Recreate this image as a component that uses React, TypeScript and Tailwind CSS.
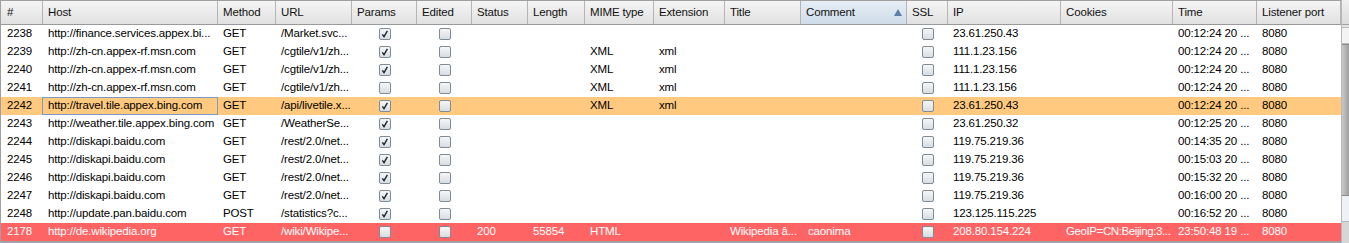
import React from "react";

const cols = [
  { name: "#", w: 42 },
  { name: "Host", w: 175 },
  { name: "Method", w: 58 },
  { name: "URL", w: 76 },
  { name: "Params", w: 65 },
  { name: "Edited", w: 55 },
  { name: "Status", w: 56 },
  { name: "Length", w: 57 },
  { name: "MIME type", w: 69 },
  { name: "Extension", w: 71 },
  { name: "Title", w: 76 },
  { name: "Comment", w: 106 },
  { name: "SSL", w: 41 },
  { name: "IP", w: 113 },
  { name: "Cookies", w: 112 },
  { name: "Time", w: 84 },
  { name: "Listener port", w: 84 },
];

type Row = {
  id: string;
  host: string;
  method: string;
  url: string;
  params: boolean;
  status?: string;
  length?: string;
  mime?: string;
  ext?: string;
  title?: string;
  comment?: string;
  ip: string;
  cookies?: string;
  time: string;
  port: string;
  kind?: "sel" | "red";
};

const rows: Row[] = [
  { id: "2238", host: "http://finance.services.appex.bi...", method: "GET", url: "/Market.svc...", params: true, ip: "23.61.250.43", time: "00:12:24 20 ...", port: "8080" },
  { id: "2239", host: "http://zh-cn.appex-rf.msn.com", method: "GET", url: "/cgtile/v1/zh...", params: true, mime: "XML", ext: "xml", ip: "111.1.23.156", time: "00:12:24 20 ...", port: "8080" },
  { id: "2240", host: "http://zh-cn.appex-rf.msn.com", method: "GET", url: "/cgtile/v1/zh...", params: true, mime: "XML", ext: "xml", ip: "111.1.23.156", time: "00:12:24 20 ...", port: "8080" },
  { id: "2241", host: "http://zh-cn.appex-rf.msn.com", method: "GET", url: "/cgtile/v1/zh...", params: false, mime: "XML", ext: "xml", ip: "111.1.23.156", time: "00:12:24 20 ...", port: "8080" },
  { id: "2242", host: "http://travel.tile.appex.bing.com", method: "GET", url: "/api/livetile.x...", params: true, mime: "XML", ext: "xml", ip: "23.61.250.43", time: "00:12:24 20 ...", port: "8080", kind: "sel" },
  { id: "2243", host: "http://weather.tile.appex.bing.com", method: "GET", url: "/WeatherSe...", params: true, ip: "23.61.250.32", time: "00:12:25 20 ...", port: "8080" },
  { id: "2244", host: "http://diskapi.baidu.com", method: "GET", url: "/rest/2.0/net...", params: true, ip: "119.75.219.36", time: "00:14:35 20 ...", port: "8080" },
  { id: "2245", host: "http://diskapi.baidu.com", method: "GET", url: "/rest/2.0/net...", params: true, ip: "119.75.219.36", time: "00:15:03 20 ...", port: "8080" },
  { id: "2246", host: "http://diskapi.baidu.com", method: "GET", url: "/rest/2.0/net...", params: true, ip: "119.75.219.36", time: "00:15:32 20 ...", port: "8080" },
  { id: "2247", host: "http://diskapi.baidu.com", method: "GET", url: "/rest/2.0/net...", params: true, ip: "119.75.219.36", time: "00:16:00 20 ...", port: "8080" },
  { id: "2248", host: "http://update.pan.baidu.com", method: "POST", url: "/statistics?c...", params: true, ip: "123.125.115.225", time: "00:16:52 20 ...", port: "8080" },
  { id: "2178", host: "http://de.wikipedia.org", method: "GET", url: "/wiki/Wikipe...", params: false, status: "200", length: "55854", mime: "HTML", title: "Wikipedia â...", comment: "caonima", ip: "208.80.154.224", cookies: "GeoIP=CN:Beijing:3...", time: "23:50:48 19 ...", port: "8080", kind: "red" },
];

function Check({ on }: { on: boolean }) {
  return (
    <div className="w-[12px] h-[12px] rounded-[2px] border border-[#7f8b97] bg-gradient-to-b from-[#f6f6f6] to-[#d9dde2] flex items-center justify-center">
      {on && (
        <svg width="8" height="8" viewBox="0 0 8 8">
          <path d="M1.4 4.4 L3 6.6 L6.4 0.8" fill="none" stroke="#1d2733" strokeWidth="1.4" />
        </svg>
      )}
    </div>
  );
}

function Cell({ w, children, center, first }: { w: number; children?: React.ReactNode; center?: boolean; first?: boolean }) {
  return (
    <div
      style={{ width: w }}
      className={`shrink-0 h-full flex items-center overflow-hidden whitespace-nowrap ${center ? "justify-center" : first ? "pl-[6px]" : "pl-[5px]"}`}
    >
      {children}
    </div>
  );
}

export default function App() {
  return (
    <div
      className="w-[1349px] h-[243px] bg-white flex overflow-hidden text-[11.5px] tracking-[-0.15px] text-black"
      style={{ fontFamily: '"Liberation Sans", Arial, sans-serif' }}
    >
      <div className="w-[1341px] flex flex-col border-l border-[#a0a0a0] border-b-2 border-b-[#a3a3a3]">
        {/* header */}
        <div className="h-[25px] flex border-t border-[#a0a0a0] border-b border-b-[#9a9a9a] bg-gradient-to-b from-[#f5f5f5] to-[#e1e1e1] shrink-0">
          {cols.map((c, i) => (
            <div
              key={c.name}
              style={{ width: c.w }}
              className={`shrink-0 h-full flex items-center justify-between border-r border-[#b4b4b4] ${i === 0 ? "pl-[6px]" : "pl-[5px]"} ${c.name === "Comment" ? "bg-gradient-to-b from-[#e6eef6] to-[#cfdde9] pr-[4px]" : ""}`}
            >
              <span className="text-[#111]">{c.name}</span>
              {c.name === "Comment" && (
                <svg width="8" height="7" viewBox="0 0 8 7">
                  <path d="M4 0 L8 7 L0 7 Z" fill="#5b7fa6" />
                </svg>
              )}
            </div>
          ))}
        </div>
        {/* rows */}
        <div className="flex flex-col">
          {rows.map((r) => {
            const bg = r.kind === "sel" ? "bg-[#ffc97f]" : r.kind === "red" ? "bg-[#ff6464] text-white" : "bg-white";
            return (
              <div key={r.id} className={`h-[18px] flex ${bg}`}>
                <Cell w={cols[0].w} first>{r.id}</Cell>
                <div
                  style={{ width: cols[1].w + 1, marginLeft: -1 }}
                  className={`shrink-0 h-full flex items-center overflow-hidden whitespace-nowrap ${r.kind === "sel" ? "border border-[#7a9cc4] pl-[5px]" : "pl-[6px]"}`}
                >
                  {r.host}
                </div>
                <Cell w={cols[2].w}>{r.method}</Cell>
                <Cell w={cols[3].w}>{r.url}</Cell>
                <Cell w={cols[4].w} center><Check on={r.params} /></Cell>
                <Cell w={cols[5].w} center><Check on={false} /></Cell>
                <Cell w={cols[6].w}>{r.status}</Cell>
                <Cell w={cols[7].w}>{r.length}</Cell>
                <Cell w={cols[8].w}>{r.mime}</Cell>
                <Cell w={cols[9].w}>{r.ext}</Cell>
                <Cell w={cols[10].w}>{r.title}</Cell>
                <Cell w={cols[11].w}><span className="pl-[2px]">{r.comment}</span></Cell>
                <Cell w={cols[12].w} center><Check on={false} /></Cell>
                <Cell w={cols[13].w}>{r.ip}</Cell>
                <Cell w={cols[14].w}><span className="tracking-[-0.4px]">{r.cookies}</span></Cell>
                <Cell w={cols[15].w}>{r.time}</Cell>
                <Cell w={cols[16].w}>{r.port}</Cell>
              </div>
            );
          })}
        </div>
      </div>
      {/* scrollbar (clipped) */}
      <div className="w-[8px] h-full flex flex-col bg-[#e4e4e4] border-l border-[#b8b8b8]">
        <div className="h-[25px] bg-gradient-to-b from-[#f0f0f0] to-[#dcdcdc] border-b border-[#a0a0a0]" />
        <div className="h-[17px] mt-[2px] bg-[#f3f3f3] border-y border-[#bcbcbc]" />
        <div className="h-[152px] bg-gradient-to-r from-[#c9c9c9] to-[#9d9d9d] border-y border-[#8a8a8a]" />
        <div className="h-[26px] bg-[#eef2f6] border-b border-[#b0b8c0]" />
        <div className="flex-1 bg-[#d6d6d6]" />
      </div>
    </div>
  );
}
